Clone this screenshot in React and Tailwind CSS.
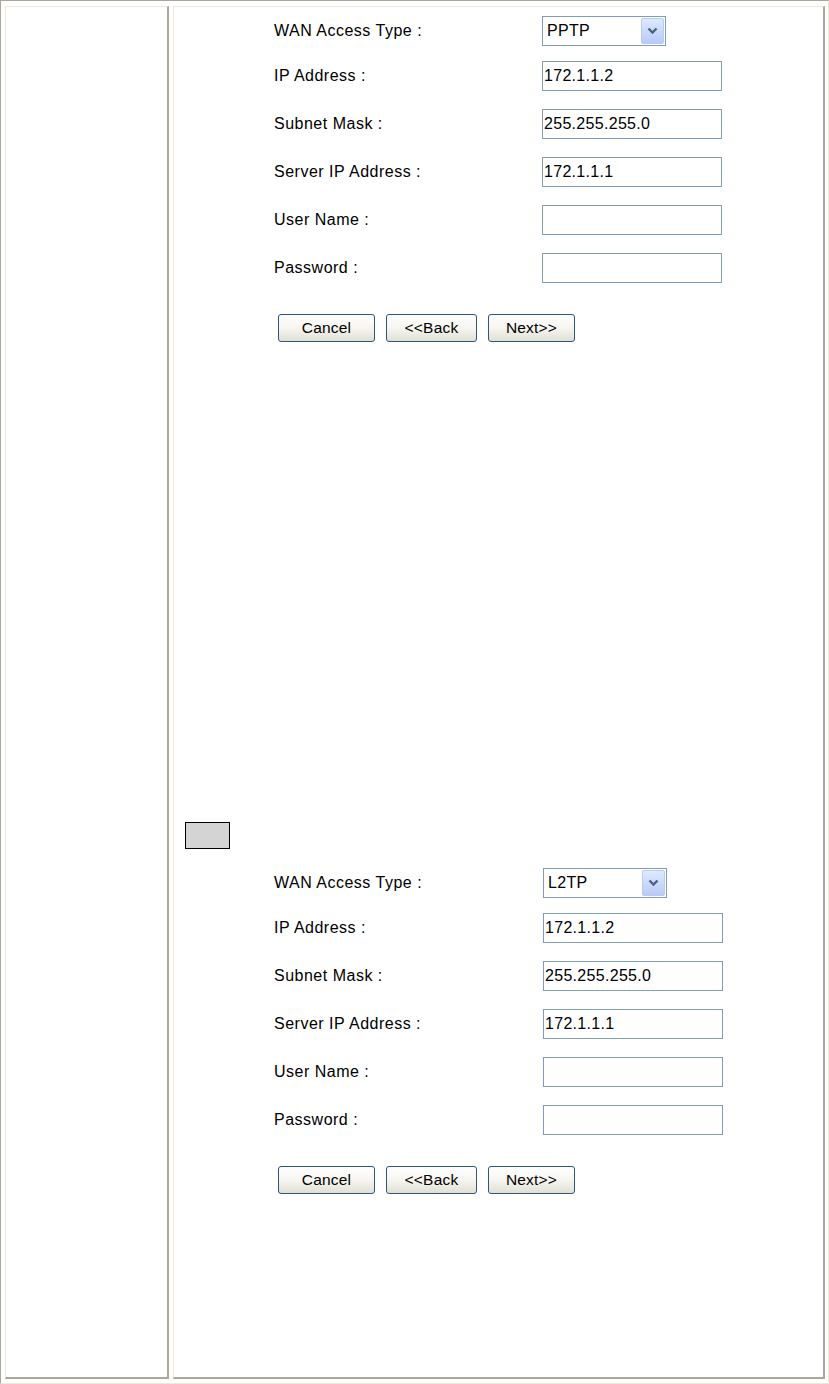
import React from "react";

const font = { fontFamily: '"Liberation Sans", Arial, sans-serif' };

const SelectBox = ({ value }) => (
  <div className="flex h-[30px] w-[124px] items-center justify-between border border-[#7f9db9] bg-white pl-[4px] pr-[1px] text-[16px] tracking-[0.3px] text-black">
    <span>{value}</span>
    <div className="flex h-[26px] w-[23px] items-center justify-center rounded-[2px] border border-[#b9cbf3] bg-gradient-to-b from-[#dfe9fe] to-[#b7cbf6]">
      <svg width="11" height="8" viewBox="0 0 11 8">
        <path d="M1.5 1.5 L5.5 5.5 L9.5 1.5" fill="none" stroke="#4d6185" strokeWidth="2.4" />
      </svg>
    </div>
  </div>
);

const TextBox = ({ value }) => (
  <div className="flex h-[30px] w-[180px] items-center border border-[#7f9db9] bg-white pl-[1px] text-[16px] tracking-[0.3px] text-black">
    {value}
  </div>
);

const Button = ({ label, width }) => (
  <div
    className={`flex h-[28px] ${width} items-center justify-center rounded-[3px] border border-[#2b5582] bg-gradient-to-b from-white via-[#f6f5f0] to-[#e2e0d4] text-[15.5px] tracking-[0.2px] text-black`}
  >
    {label}
  </div>
);

const Row = ({ label, children, shift }) => (
  <div className="flex items-center">
    <div className="ml-[100px] w-[268px] text-[16px] tracking-[0.5px] text-black">{label}</div>
    <div className={shift}>{children}</div>
  </div>
);

const Section = ({ type, shift }) => (
  <div className="flex flex-col">
    <Row label="WAN Access Type :" shift="">
      <div className={shift}>
        <SelectBox value={type} />
      </div>
    </Row>
    <div className="mt-[15px] flex flex-col gap-[18px]">
      <Row label="IP Address :" shift={shift}>
        <TextBox value="172.1.1.2" />
      </Row>
      <Row label="Subnet Mask :" shift={shift}>
        <TextBox value="255.255.255.0" />
      </Row>
      <Row label="Server IP Address :" shift={shift}>
        <TextBox value="172.1.1.1" />
      </Row>
      <Row label="User Name :" shift={shift}>
        <TextBox value="" />
      </Row>
      <Row label="Password :" shift={shift}>
        <TextBox value="" />
      </Row>
    </div>
    <div className="ml-[104px] mt-[31px] flex gap-[11px]">
      <Button label="Cancel" width="w-[97px]" />
      <Button label="<<Back" width="w-[91px]" />
      <Button label="Next>>" width="w-[87px]" />
    </div>
  </div>
);

export default function App() {
  return (
    <div
      style={font}
      className="flex h-[1384px] w-[829px] gap-[4px] border-t border-l border-r border-b border-t-[#aca899] border-l-[#aca899] border-r-[#ece9d8] border-b-[#ece9d8] bg-white pt-[5px] pl-[4px] pr-[3px] pb-[4px]"
    >
      <div className="w-[164px] border-t border-l border-t-[#ece9d8] border-l-[#ece9d8] border-r-2 border-b-2 border-r-[#aca899] border-b-[#aca899]" />
      <div className="flex flex-1 flex-col border-t border-l border-t-[#ece9d8] border-l-[#ece9d8] border-r-2 border-b-2 border-r-[#aca899] border-b-[#aca899] pt-[9px]">
        <Section type="PPTP" shift="" />
        <div className="ml-[11px] mt-[480px] h-[27px] w-[45px] border border-black bg-[#d4d4d4]" />
        <div className="mt-[19px]">
          <Section type="L2TP" shift="ml-[1px]" />
        </div>
      </div>
    </div>
  );
}
